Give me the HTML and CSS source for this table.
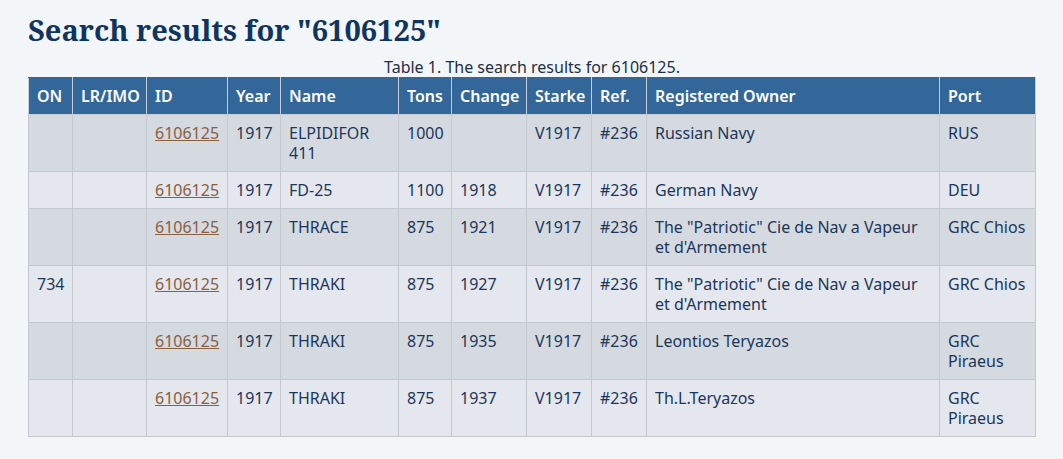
FILE: index.html
```html
<!DOCTYPE html>
<html lang="en">
<head>
<meta charset="utf-8">
<title>Search results</title>
<link rel="stylesheet" href="styles.css">
</head>
<body>
<main class="page">
  <h1 class="title">Search results for "6106125"</h1>
  <table class="results">
    <caption class="caption">Table 1. The search results for 6106125.</caption>
    <colgroup>
      <col class="c-on"><col class="c-lr"><col class="c-id"><col class="c-year"><col class="c-name"><col class="c-tons"><col class="c-change"><col class="c-starke"><col class="c-ref"><col class="c-owner"><col class="c-port">
    </colgroup>
    <thead>
      <tr><th>ON</th><th>LR/IMO</th><th>ID</th><th>Year</th><th>Name</th><th>Tons</th><th>Change</th><th>Starke</th><th>Ref.</th><th>Registered Owner</th><th>Port</th></tr>
    </thead>
    <tbody>
      <tr><td></td><td></td><td><a href="#">6106125</a></td><td>1917</td><td>ELPIDIFOR 411</td><td>1000</td><td></td><td>V1917</td><td>#236</td><td>Russian Navy</td><td>RUS</td></tr>
      <tr><td></td><td></td><td><a href="#">6106125</a></td><td>1917</td><td>FD-25</td><td>1100</td><td>1918</td><td>V1917</td><td>#236</td><td>German Navy</td><td>DEU</td></tr>
      <tr><td></td><td></td><td><a href="#">6106125</a></td><td>1917</td><td>THRACE</td><td>875</td><td>1921</td><td>V1917</td><td>#236</td><td>The "Patriotic" Cie de Nav a Vapeur et d'Armement</td><td>GRC Chios</td></tr>
      <tr><td>734</td><td></td><td><a href="#">6106125</a></td><td>1917</td><td>THRAKI</td><td>875</td><td>1927</td><td>V1917</td><td>#236</td><td>The "Patriotic" Cie de Nav a Vapeur et d'Armement</td><td>GRC Chios</td></tr>
      <tr><td></td><td></td><td><a href="#">6106125</a></td><td>1917</td><td>THRAKI</td><td>875</td><td>1935</td><td>V1917</td><td>#236</td><td>Leontios Teryazos</td><td>GRC Piraeus</td></tr>
      <tr><td></td><td></td><td><a href="#">6106125</a></td><td>1917</td><td>THRAKI</td><td>875</td><td>1937</td><td>V1917</td><td>#236</td><td>Th.L.Teryazos</td><td>GRC Piraeus</td></tr>
    </tbody>
  </table>
</main>
</body>
</html>
```
FILE: styles.css
```css
html, body {
  margin: 0;
  padding: 0;
  background: #f3f6f9;
}
body {
  font-family: "Noto Sans", "Open Sans", sans-serif;
  font-size: 16px;
  line-height: 20px;
  color: #1c3659;
}
.page {
  padding: 8px 28px 20px;
}
.title {
  margin: 0 0 5px;
  font-family: "Noto Serif", "DejaVu Serif", serif;
  font-weight: 700;
  font-size: 29px;
  line-height: 44px;
  color: #0f3460;
}
.results {
  width: 100%;
  border-collapse: collapse;
  table-layout: fixed;
}
.caption {
  font-size: 16px;
  line-height: 20px;
  color: #1e2f44;
}
.c-on { width: 44px; }
.c-lr { width: 74px; }
.c-id { width: 81px; }
.c-year { width: 53px; }
.c-name { width: 118px; }
.c-tons { width: 53px; }
.c-change { width: 75px; }
.c-starke { width: 65px; }
.c-ref { width: 55px; }
.c-owner { width: 293px; }
.c-port { width: 96px; }
.results th {
  background: #336699;
  color: #ffffff;
  font-weight: 600;
  text-align: left;
  padding: 8px;
  border: 1px solid #c9ced4;
  border-top-color: #336699;
}
.results td {
  padding: 8px;
  border: 1px solid #c3c8ce;
  vertical-align: top;
}
.results tbody tr:nth-child(odd) td { background: #d5dae1; }
.results tbody tr:nth-child(even) td { background: #e4e8ee; }
.results a {
  color: #8a6040;
  text-decoration: underline;
}
```
